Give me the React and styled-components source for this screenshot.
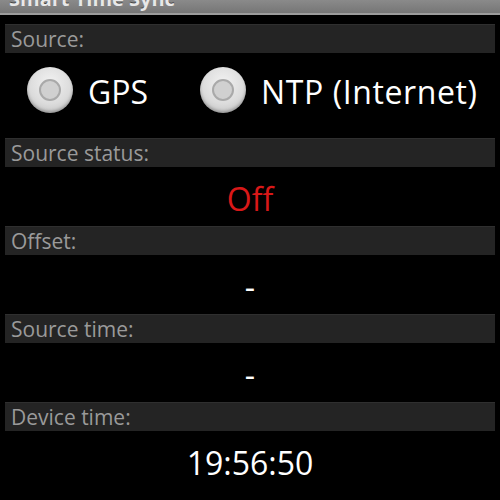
import React from 'react'
import styled, { createGlobalStyle } from 'styled-components'

const GlobalStyle = createGlobalStyle`
  html, body {
    margin: 0;
    background: #000;
  }
  body {
    font-family: "Open Sans", "DejaVu Sans", sans-serif;
    width: 500px;
    height: 500px;
    overflow: hidden;
  }
`

const App = () => {
  return (
    <Screen>
      <GlobalStyle />
      <TitleBar>
        <TitleText>Smart Time Sync</TitleText>
      </TitleBar>
      <Content>
        <SectionHeader>Source:</SectionHeader>
        <RadioRow>
          <RadioOption>
            <RadioKnob />
            <RadioLabel>GPS</RadioLabel>
          </RadioOption>
          <RadioOption>
            <RadioKnob />
            <RadioLabel wide>NTP (Internet)</RadioLabel>
          </RadioOption>
        </RadioRow>

        <SectionHeader>Source status:</SectionHeader>
        <Value color="#d81818">Off</Value>

        <SectionHeader>Offset:</SectionHeader>
        <Value>-</Value>

        <SectionHeader>Source time:</SectionHeader>
        <Value>-</Value>

        <SectionHeader>Device time:</SectionHeader>
        <Value>19:56:50</Value>
      </Content>
    </Screen>
  )
}

export default App

// SCREEN
const Screen = styled.div`
  width: 500px;
  height: 500px;
  background: #000;
  overflow: hidden;
`

const TitleBar = styled.div`
  height: 13px;
  background: linear-gradient(#8a8a8a, #767676);
  border-bottom: 2px solid #9c9c9c;
  overflow: hidden;
  padding-left: 9px;
`

const TitleText = styled.div`
  margin-top: -11px;
  font-size: 20px;
  line-height: 20px;
  font-weight: bold;
  color: #e8e8e8;
  text-shadow: 0 -1px 0 #444;
`

const Content = styled.div`
  padding: 9px 5px 0;
`

const SectionHeader = styled.div`
  height: 28px;
  line-height: 28px;
  background: #242424;
  border-top: 1px solid #2f2f2f;
  color: #9a9a9a;
  font-size: 21px;
  padding-left: 6px;
`

// RADIO GROUP
const RadioRow = styled.div`
  display: flex;
  align-items: center;
  gap: 52px;
  padding: 14px 0 25px 22px;
`

const RadioOption = styled.div`
  display: flex;
  align-items: center;
  gap: 15px;
`

const RadioKnob = styled.span`
  position: relative;
  flex: none;
  width: 46px;
  height: 46px;
  border-radius: 50%;
  background: radial-gradient(circle at 50% 35%, #f2f2f2 0%, #dcdcdc 55%, #b8b8b8 100%);
  box-shadow: inset 0 -2px 3px rgba(0, 0, 0, 0.25);
  &::after {
    content: '';
    position: absolute;
    left: 12px;
    top: 12px;
    width: 18px;
    height: 18px;
    border-radius: 50%;
    border: 2px solid #a9a9a9;
    background: #d0d0d0;
  }
`

const RadioLabel = styled.span`
  color: #fff;
  font-size: 32px;
  line-height: 1;
  padding-top: 4px;
  letter-spacing: ${(p) => (p.wide ? '0.6px' : '0')};
`

const Value = styled.div`
  height: 59px;
  line-height: 59px;
  padding-top: 2px;
  box-sizing: border-box;
  text-align: center;
  font-size: 32px;
  color: ${(p) => p.color || '#fff'};
`
